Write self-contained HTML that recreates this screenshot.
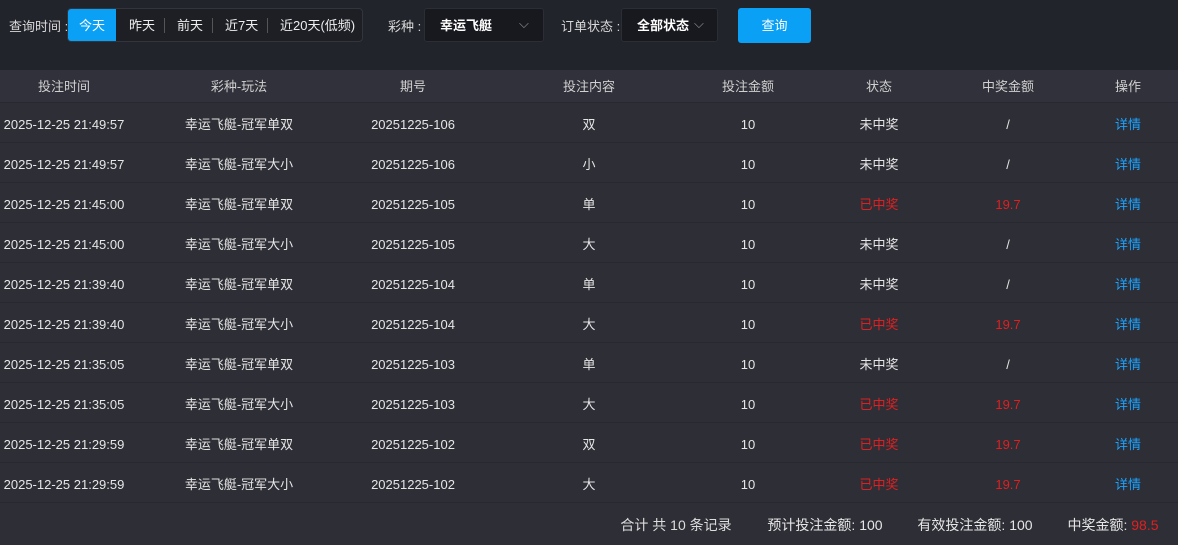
<!DOCTYPE html><html><head><meta charset="utf-8"><style>
*{margin:0;padding:0;box-sizing:border-box}
body{width:1178px;height:543px;background:#2d2e36;font-family:"Liberation Sans","Noto Sans CJK SC",sans-serif;font-size:13px;color:#e6e6e6;overflow:hidden;position:relative}
.top{position:absolute;left:0;top:0;width:1178px;height:70px;background:#22242b}
.lbl{position:absolute;top:16px;font-size:13px;color:#d8d8d8}
.seg{position:absolute;left:67px;top:8px;width:296px;height:34px;border:1px solid #33353d;border-radius:4px;background:#1d1f25}
.seg .on{position:absolute;left:0;top:0;width:48px;height:32px;background:#0aa0f5;border-radius:3px 0 0 3px;color:#fff;text-align:center;line-height:34px}
.seg span{position:absolute;top:0;line-height:34px;color:#eee}
.seg i{position:absolute;top:9px;width:1px;height:15px;background:#555}
.sel{position:absolute;top:8px;height:34px;background:#18191e;border:1px solid #2c2e35;border-radius:3px;color:#fff;line-height:34px;font-weight:bold}
.btn{position:absolute;left:738px;top:8px;width:73px;height:35px;background:#0aa0f5;border-radius:3px;color:#fff;text-align:center;line-height:35px}
.row{position:absolute;left:0;width:1178px;height:40px;border-bottom:1px solid #272830}
.row span{position:absolute;top:2px;line-height:40px;transform:translateX(-50%);white-space:nowrap}
.hd{top:70px;height:33px;background:#30313a}
.hd span{line-height:33px;color:#d0d0d0;top:0}
.r{color:#e02020}.b{color:#1aa3ff}
.ft span{font-size:14px}
</style></head><body>
<div class="top"></div>
<div class="lbl" style="left:9px">查询时间 :</div>
<div class="seg"><div class="on">今天</div><span style="left:61px">昨天</span><i style="left:96px"></i><span style="left:109px">前天</span><i style="left:144px"></i><span style="left:157px">近7天</span><i style="left:199px"></i><span style="left:212px">近20天(低频)</span></div>
<div class="lbl" style="left:388px">彩种 :</div>
<div class="sel" style="left:424px;width:120px;padding-left:15px">幸运飞艇<span style="position:absolute;left:94px;top:-2px;color:#999;font-weight:normal">⌵</span></div>
<div class="lbl" style="left:561px">订单状态 :</div>
<div class="sel" style="left:621px;width:97px;padding-left:15px">全部状态<span style="position:absolute;left:72px;top:-2px;color:#999;font-weight:normal">⌵</span></div>
<div class="btn">查询</div>
<div class="row hd"><span style="left:64px">投注时间</span><span style="left:239px">彩种-玩法</span><span style="left:413px">期号</span><span style="left:589px">投注内容</span><span style="left:748px">投注金额</span><span style="left:879px">状态</span><span style="left:1008px">中奖金额</span><span style="left:1128px">操作</span></div>
<div id="rows"></div>
<div class="row ft" style="top:503px;border:none"><span style="left:676px;color:#ddd">合计 共 10 条记录</span><span style="left:825px">预计投注金额: 100</span><span style="left:975px">有效投注金额: 100</span><span style="left:1113px">中奖金额: <b class="r" style="font-weight:normal">98.5</b></span></div>
<script>
var d=[["21:49:57","冠军单双","106","双",0],["21:49:57","冠军大小","106","小",0],["21:45:00","冠军单双","105","单",1],["21:45:00","冠军大小","105","大",0],["21:39:40","冠军单双","104","单",0],["21:39:40","冠军大小","104","大",1],["21:35:05","冠军单双","103","单",0],["21:35:05","冠军大小","103","大",1],["21:29:59","冠军单双","102","双",1],["21:29:59","冠军大小","102","大",1]];
var h="";d.forEach(function(r,i){h+='<div class="row" style="top:'+(103+i*40)+'px"><span style="left:64px">2025-12-25 '+r[0]+'</span><span style="left:239px">幸运飞艇-'+r[1]+'</span><span style="left:413px">20251225-'+r[2]+'</span><span style="left:589px">'+r[3]+'</span><span style="left:748px">10</span>'+(r[4]?'<span class="r" style="left:879px">已中奖</span><span class="r" style="left:1008px">19.7</span>':'<span style="left:879px">未中奖</span><span style="left:1008px">/</span>')+'<span class="b" style="left:1128px">详情</span></div>'});
document.getElementById("rows").innerHTML=h;
</script>
</body></html>
